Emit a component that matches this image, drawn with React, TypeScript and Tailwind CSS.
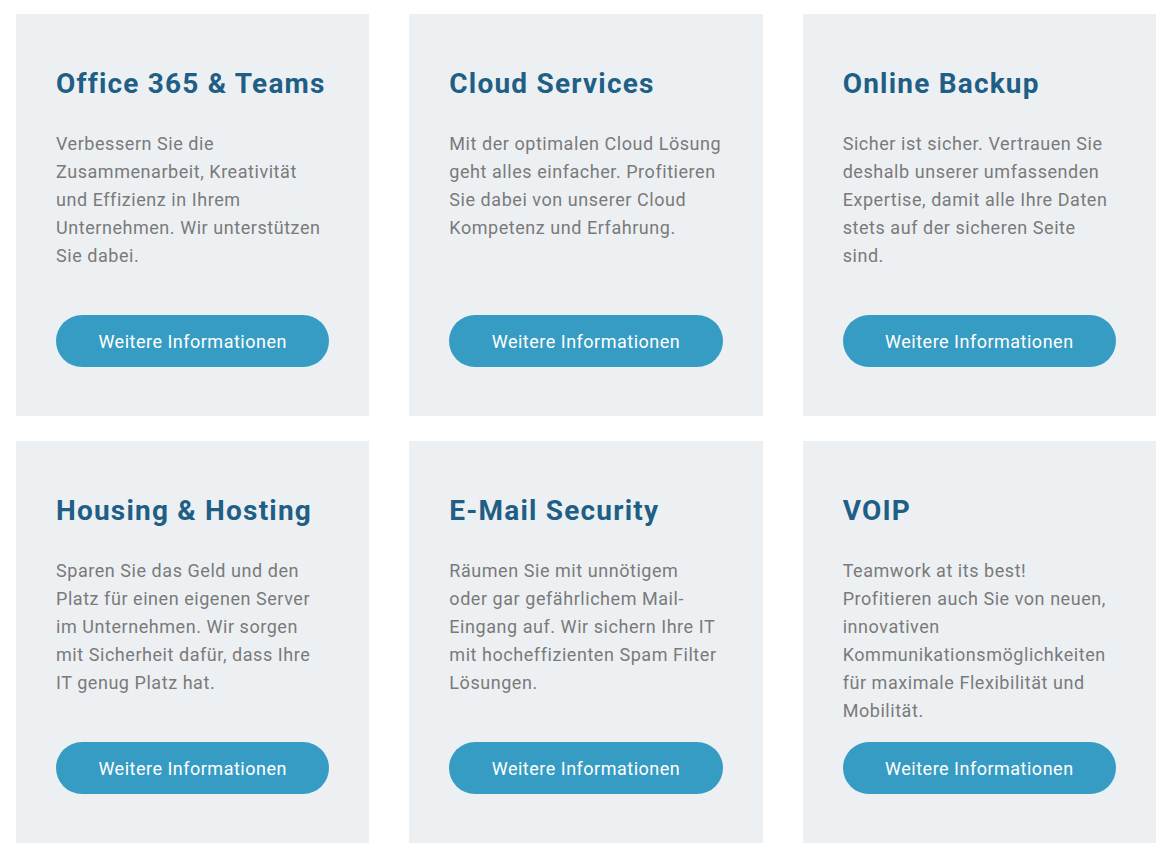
const services = [
  {
    title: 'Office 365 & Teams',
    lines: ['Verbessern Sie die', 'Zusammenarbeit, Kreativität', 'und Effizienz in Ihrem', 'Unternehmen. Wir unterstützen', 'Sie dabei.'],
  },
  {
    title: 'Cloud Services',
    lines: ['Mit der optimalen Cloud Lösung', 'geht alles einfacher. Profitieren', 'Sie dabei von unserer Cloud', 'Kompetenz und Erfahrung.'],
  },
  {
    title: 'Online Backup',
    lines: ['Sicher ist sicher. Vertrauen Sie', 'deshalb unserer umfassenden', 'Expertise, damit alle Ihre Daten', 'stets auf der sicheren Seite', 'sind.'],
  },
  {
    title: 'Housing & Hosting',
    lines: ['Sparen Sie das Geld und den', 'Platz für einen eigenen Server', 'im Unternehmen. Wir sorgen', 'mit Sicherheit dafür, dass Ihre', 'IT genug Platz hat.'],
  },
  {
    title: 'E-Mail Security',
    lines: ['Räumen Sie mit unnötigem', 'oder gar gefährlichem Mail-', 'Eingang auf. Wir sichern Ihre IT', 'mit hocheffizienten Spam Filter', 'Lösungen.'],
  },
  {
    title: 'VOIP',
    lines: ['Teamwork at its best!', 'Profitieren auch Sie von neuen,', 'innovativen', 'Kommunikationsmöglichkeiten', 'für maximale Flexibilität und', 'Mobilität.'],
  },
];

const ServiceCard = ({ title, lines }: { title: string; lines: string[] }) => (
  <div className="bg-[#edf0f3] h-[402px] flex flex-col px-10 pt-[53px] pb-[49px]">
    <h3 className="text-[28px] leading-[34px] font-bold text-[#1f5e85] tracking-[1.2px]">
      {title}
    </h3>
    <p className="mt-[29px] text-[18px] leading-7 text-[#7a7a7a] tracking-[0.55px]">
      {lines.map((line, i) => (
        <span key={i} className="block whitespace-nowrap">
          {line}
        </span>
      ))}
    </p>
    <a
      href="#"
      className="mt-auto h-[52px] w-full rounded-full bg-[#369cc3] text-white text-[18px] font-normal flex items-center justify-center tracking-[0.5px]"
    >
      Weitere Informationen
    </a>
  </div>
);

export default function App() {
  return (
    <div className="bg-white min-h-[862px] pt-[14px] pl-4" style={{ fontFamily: 'Roboto, sans-serif' }}>
      <div className="w-[1140px] grid grid-cols-3 gap-x-10 gap-y-[25px]">
        {services.map((s) => (
          <ServiceCard key={s.title} title={s.title} lines={s.lines} />
        ))}
      </div>
    </div>
  );
}
